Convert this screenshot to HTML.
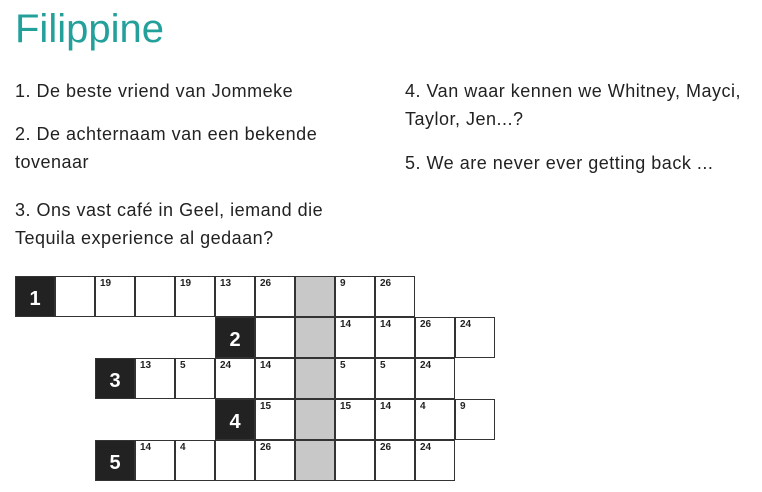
<!DOCTYPE html>
<html><head><meta charset="utf-8"><style>
body{margin:0;width:762px;height:492px;background:#fff;position:relative;overflow:hidden;font-family:"Liberation Sans",Arial,sans-serif;color:#222}
.t{position:absolute;left:15px;top:4px;font-size:40px;line-height:50px;color:#24a09b}
.p{position:absolute;font-size:18px;letter-spacing:0.5px;line-height:28px;white-space:nowrap}
.c{position:absolute;width:40px;height:41px;box-sizing:border-box;border:1px solid #333;background:#fff}
.c span{position:absolute;left:4px;top:1px;font-size:10px;font-weight:bold;line-height:12px;color:#222}
.b{background:#222;color:#fff;font-weight:bold;font-size:20px;text-align:center;line-height:39px}
.b b{display:inline-block;margin-top:3px}
.g{background:#c8c8c8}
</style></head><body>
<div class="t">Filippine</div>
<div class="p" style="left:15px;top:77px">1. De beste vriend van Jommeke</div>
<div class="p" style="left:15px;top:120px">2. De achternaam van een bekende<br>tovenaar</div>
<div class="p" style="left:15px;top:196px">3. Ons vast café in Geel, iemand die<br>Tequila experience al gedaan?</div>
<div class="p" style="left:405px;top:77px">4. Van waar kennen we Whitney, Mayci,<br>Taylor, Jen...?</div>
<div class="p" style="left:405px;top:149px">5. We are never ever getting back ...</div>
<div id="g"></div>
<script>
var rows=[
[[0,'B1'],[1,''],[2,'19'],[3,''],[4,'19'],[5,'13'],[6,'26'],[7,'G'],[8,'9'],[9,'26']],
[[5,'B2'],[6,''],[7,'G'],[8,'14'],[9,'14'],[10,'26'],[11,'24']],
[[2,'B3'],[3,'13'],[4,'5'],[5,'24'],[6,'14'],[7,'G'],[8,'5'],[9,'5'],[10,'24']],
[[5,'B4'],[6,'15'],[7,'G'],[8,'15'],[9,'14'],[10,'4'],[11,'9']],
[[2,'B5'],[3,'14'],[4,'4'],[5,''],[6,'26'],[7,'G'],[8,''],[9,'26'],[10,'24']]
];
var h='';
rows.forEach(function(r,i){r.forEach(function(c){
var x=15+40*c[0],y=276+41*i,v=c[1],cls='c',inner='';
if(v[0]=='B'){cls+=' b';inner='<b>'+v.slice(1)+'</b>';}
else if(v=='G'){cls+=' g';}
else if(v){inner='<span>'+v+'</span>';}
h+='<div class="'+cls+'" style="left:'+x+'px;top:'+y+'px">'+inner+'</div>';
});});
document.getElementById('g').innerHTML=h;
</script>
</body></html>
